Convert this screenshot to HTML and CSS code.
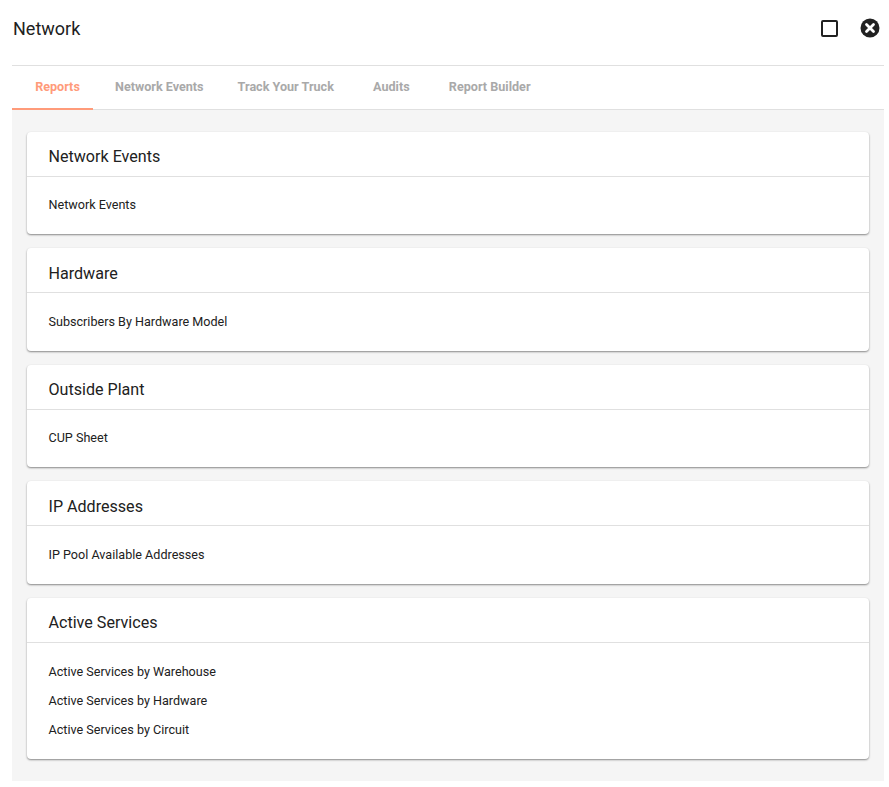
FILE: index.html
```html
<!DOCTYPE html>
<html lang="en">
<head>
    <meta charset="UTF-8">
    <meta name="viewport" content="width=device-width, initial-scale=1.0">
    <title>Network</title>
    <link rel="stylesheet" href="styles.css">
</head>
<body>
    <div class="dialog">
        <div class="dialog-header">
            <h1>Network</h1>
            <div class="dialog-actions">
                <svg class="icon-max" width="17" height="17" viewBox="0 0 17 17">
                    <rect x="1" y="1" width="15" height="15" rx="1" fill="none" stroke="#212121" stroke-width="2"/>
                </svg>
                <svg class="icon-close" width="20" height="20" viewBox="0 0 20 20">
                    <circle cx="10" cy="10" r="9.5" fill="#212121"/>
                    <path d="M6.5 6.5L13.5 13.5M13.5 6.5L6.5 13.5" stroke="#fff" stroke-width="2.8" stroke-linecap="round"/>
                </svg>
            </div>
        </div>
        <div class="tabs">
            <div class="tab active">Reports</div>
            <div class="tab">Network Events</div>
            <div class="tab">Track Your Truck</div>
            <div class="tab">Audits</div>
            <div class="tab">Report Builder</div>
        </div>
        <div class="content">
            <div class="card">
                <div class="card-title">Network Events</div>
                <div class="card-body">
                    <div class="report-link">Network Events</div>
                </div>
            </div>
            <div class="card">
                <div class="card-title">Hardware</div>
                <div class="card-body">
                    <div class="report-link">Subscribers By Hardware Model</div>
                </div>
            </div>
            <div class="card">
                <div class="card-title">Outside Plant</div>
                <div class="card-body">
                    <div class="report-link">CUP Sheet</div>
                </div>
            </div>
            <div class="card">
                <div class="card-title">IP Addresses</div>
                <div class="card-body">
                    <div class="report-link">IP Pool Available Addresses</div>
                </div>
            </div>
            <div class="card">
                <div class="card-title">Active Services</div>
                <div class="card-body">
                    <div class="report-link">Active Services by Warehouse</div>
                    <div class="report-link">Active Services by Hardware</div>
                    <div class="report-link">Active Services by Circuit</div>
                </div>
            </div>
        </div>
    </div>
</body>
</html>
```

FILE: styles.css
```css
* {
    margin: 0;
    padding: 0;
    box-sizing: border-box;
    font-family: 'Roboto', sans-serif;
}
body {
    background-color: #fff;
    color: #212121;
}
.dialog {
    padding: 0 5px 0 12px;
}
.dialog-header {
    display: flex;
    justify-content: space-between;
    align-items: center;
    height: 66px;
    border-bottom: 1px solid #e0e0e0;
    padding: 0 4px 9px 1px;
}
.dialog-header h1 {
    font-size: 18px;
    font-weight: 400;
    line-height: 24px;
    margin-top: 2px;
}
.dialog-actions {
    display: flex;
    align-items: center;
    gap: 22.5px;
}
.tabs {
    display: flex;
    height: 44px;
    padding-left: 5px;
    border-bottom: 1px solid #e0e0e0;
}
.tab {
    position: relative;
    min-width: 81px;
    font-size: 12.6px;
    font-weight: 700;
    color: #a9a9a9;
    line-height: 42px;
    padding: 0 17px;
    text-align: center;
}
.tab.active {
    color: #ff9b7a;
}
.tab.active::after {
    content: '';
    position: absolute;
    left: -5px;
    bottom: -1px;
    width: 81px;
    height: 2px;
    background-color: #ff9b7a;
}
.content {
    background-color: #f5f5f5;
    padding: 22px 15px;
    display: flex;
    flex-direction: column;
    gap: 14px;
}
.card {
    background: white;
    border-radius: 4px;
    box-shadow: 0 1px 2px rgba(0,0,0,0.45);
}
.card-title {
    font-size: 16.1px;
    line-height: 24px;
    padding: 13.35px 21.5px 6.65px;
    border-bottom: 1px solid #e0e0e0;
}
.card-body {
    padding: 13.35px 21.5px 15.1px;
}
.card:last-child .card-body {
    padding: 14px 21.5px 15px;
}
.report-link {
    font-size: 12.6px;
    line-height: 29px;
    color: #212121;
}
```
